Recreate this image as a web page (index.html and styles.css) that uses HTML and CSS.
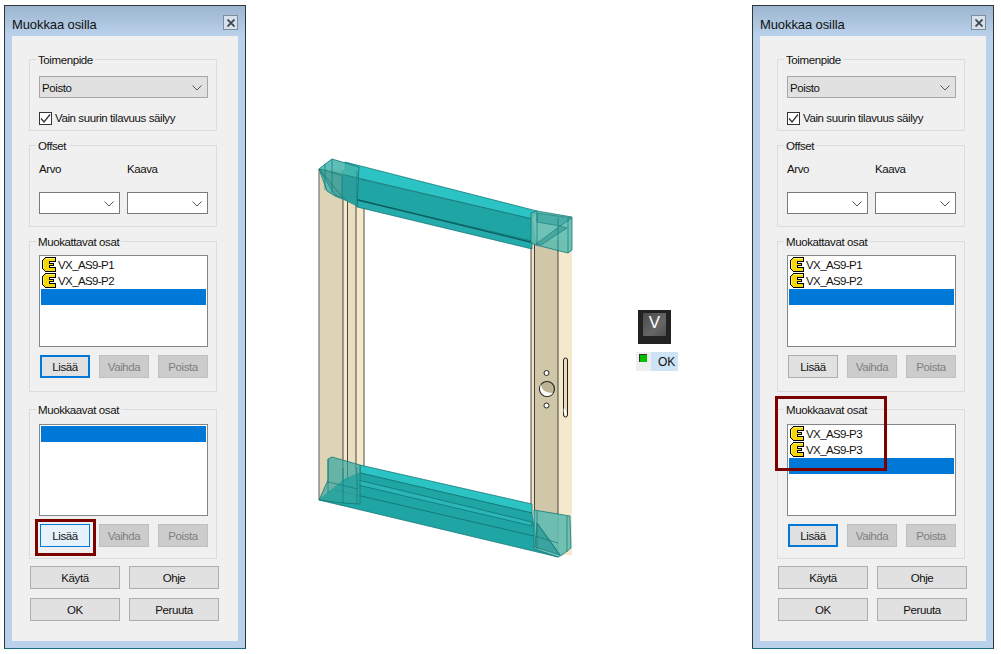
FILE: index.html
```html
<!DOCTYPE html>
<html lang="fi">
<head>
    <meta charset="UTF-8">
    <title>Muokkaa osilla</title>
    <link rel="stylesheet" href="styles.css">
</head>
<body>
    <svg class="defs" width="0" height="0">
        <symbol id="part" viewBox="0 0 14 15">
            <path d="M3.500 .5H13.500V4.500H7.500V6.500H11.500V8.500H7.500V10.500H13.500V14.500H3.500L.5 11.500V3.500Z" fill="#f7d708" stroke="#000" shape-rendering="crispEdges"/>
            <path d="M3.500 1.500H12.500M1.500 3.500V11" fill="none" stroke="#fff27a" shape-rendering="crispEdges"/>
        </symbol>
        <symbol id="chevron" viewBox="0 0 10 6">
            <path d="M.5 .5L5 5L9.500 .5" fill="none" stroke="#555"/>
        </symbol>
    </svg>
    <div class="stage">
        <!-- vasen dialogi -->
        <div class="dialog">
            <div class="titlebar">
                <span>Muokkaa osilla</span>
                <div class="close"><svg width="8" height="8" viewBox="0 0 8 8"><path d="M.5 .5L7.500 7.500M7.500 .5L.5 7.500" stroke="#3c4650" stroke-width="1.800"/></svg></div>
            </div>
            <div class="client">
                <div class="group group-action">
                    <div class="group-title">Toimenpide</div>
                    <div class="combo combo-grey">Poisto<svg class="chev"><use href="#chevron"/></svg></div>
                    <div class="check-row">
                        <div class="check"><svg width="13" height="13" viewBox="0 0 13 13"><path d="M2 6.500L5 10L11 2.500" fill="none" stroke="#333" stroke-width="1.300"/></svg></div>
                        <span>Vain suurin tilavuus säilyy</span>
                    </div>
                </div>
                <div class="group group-offset">
                    <div class="group-title">Offset</div>
                    <div class="offset-grid">
                        <div>Arvo</div>
                        <div>Kaava</div>
                        <div class="combo"><svg class="chev"><use href="#chevron"/></svg></div>
                        <div class="combo"><svg class="chev"><use href="#chevron"/></svg></div>
                    </div>
                </div>
                <div class="group group-parts group-edit">
                    <div class="group-title">Muokattavat osat</div>
                    <div class="list">
                        <div class="row"><svg class="part"><use href="#part"/></svg>VX_AS9-P1</div>
                        <div class="row"><svg class="part"><use href="#part"/></svg>VX_AS9-P2</div>
                        <div class="row selected"></div>
                    </div>
                    <div class="btn-row">
                        <div class="btn focus">Lisää</div>
                        <div class="btn off">Vaihda</div>
                        <div class="btn off">Poista</div>
                    </div>
                </div>
                <div class="group group-parts group-tool">
                    <div class="group-title">Muokkaavat osat</div>
                    <div class="list">
                        <div class="row selected"></div>
                    </div>
                    <div class="btn-row">
                        <div class="btn hover">Lisää</div>
                        <div class="btn off">Vaihda</div>
                        <div class="btn off">Poista</div>
                    </div>
                </div>
                <div class="bottom-btns">
                    <div class="btn">Käytä</div>
                    <div class="btn">Ohje</div>
                    <div class="btn">OK</div>
                    <div class="btn">Peruuta</div>
                </div>
            </div>
            <div class="mark mark-left"></div>
        </div>

        <!-- malli -->
        <div class="view">
            <svg class="model" viewBox="246 0 506 654" width="506" height="654">
                <!-- vasen pysty -->
                <polygon points="319,169 343,170 343,506 319,500" fill="#dfd3b5"/>
                <polygon points="343,170 348,170 348,506 343,506" fill="#f6e9c9"/>
                <polygon points="348,170 356,170 356,506 348,506" fill="#e9dec0"/>
                <polygon points="356,170 364,170 364,506 356,506" fill="#f6e9cb"/>
                <path d="M319 169V500" stroke="#777" stroke-width="1.200"/>
                <path d="M343 170V506M347.500 170V506M356 170V506M364 170V470" stroke="#222" stroke-width=".8"/>
                <!-- oikea pysty -->
                <rect x="531" y="240" width="3" height="275" fill="#f0e3c4"/>
                <rect x="534" y="240" width="24" height="310" fill="#d0c6a8"/>
                <rect x="558" y="240" width="14" height="315" fill="#f5e9cd"/>
                <path d="M531 240V515M534.500 240V550M558 240V550" stroke="#222" stroke-width=".8"/>
                <!-- lukko -->
                <circle cx="547" cy="389" r="7.500" fill="#bdb394" stroke="#222" stroke-width="1.100"/>
                <path d="M541 384C541 390 546 393 553 393C550 397 543 397 541 392C539.500 389 540 386 541 384Z" fill="#fff"/>
                <circle cx="546.500" cy="373" r="2.500" fill="#fff" stroke="#222"/>
                <circle cx="546.500" cy="405.500" r="2.500" fill="#fff" stroke="#222"/>
                <rect x="563.500" y="358" width="4" height="59" rx="2" fill="#e8dcbc" stroke="#222"/>
                <path d="M564 408C566 410 567 413 566 416C564 415 563 411 564 408Z" fill="#fff"/>

                <!-- yläpalkki -->
                <polygon points="345,162 537,211 532,219 345,175" fill="#2bc3c3" stroke="#0f6f70" stroke-width=".7"/>
                <polygon points="342,174 360,179 532,219 536,244 342,198" fill="#20a5a5" stroke="#0f6f70" stroke-width=".7"/>
                <polygon points="357,200 532,241 532,249 357,207" fill="#25abab" stroke="#0f6f70" stroke-width=".7"/>
                <path d="M342 196L534 243" stroke="#0c5c5e" stroke-width="1.300"/>
                <polygon points="319,169 325,164 332,159 359,167 357,206 345,200 335,196 327,191" fill="#43b3aa" fill-opacity=".85" stroke="#12787a" stroke-width=".8"/>
                <polygon points="342,175 357,178 357,205 342,199" fill="#2a9d9d"/>
                <polygon points="319,169 335,195 342,198 342,176 328,171" fill="#4ba59c" stroke="#12787a" stroke-width=".7"/>
                <path d="M325 164V190M332 159V193M357 171V205M332 172L358 178M319 169L345 200" stroke="#12787a" stroke-width=".7" fill="none"/>
                <polygon points="531,213 537,211 572,217 572,250 568,253 536,245 531,243" fill="#5fbcae" fill-opacity=".9" stroke="#12787a" stroke-width=".8"/>
                <polygon points="536,244 560,226 567,228 541,245" fill="#49a79f" stroke="#12787a" stroke-width=".6"/>
                <polygon points="537,213 572,218 560,226 537,222" fill="#3fa8a0" fill-opacity=".8" stroke="#12787a" stroke-width=".6"/>
                <path d="M537 211V245M568 218V253M558 218V252" stroke="#12787a" stroke-width=".7"/>

                <!-- alapalkki -->
                <polygon points="360,465 532,504 532,513 360,473" fill="#2bc3c3" stroke="#0f6f70" stroke-width=".7"/>
                <polygon points="319,500 345,479 360,473 532,513 537,549 558,557" fill="#20a5a5" stroke="#0f6f70" stroke-width=".7"/>
                <polygon points="358,480 532,522 532,526 358,485" fill="#2bb5b5" stroke="#0f6f70" stroke-width=".7"/>
                <path d="M335 490L534 536" stroke="#0f6f70" stroke-width=".8"/>
                <polygon points="328,459 332,457 360,465 360,504 343,503 319,500 328,480" fill="#33a79f" fill-opacity=".7" stroke="#12787a" stroke-width=".8"/>
                <path d="M328 459V493M343 468V503M357 467V503M328 482L358 489" stroke="#12787a" stroke-width=".7" fill="none"/>
                <polygon points="534,510 570,516 571,548 562,555 558,557 534,549" fill="#62bbb0" fill-opacity=".9" stroke="#12787a" stroke-width=".8"/>
                <polygon points="537,523 560,555 535,547" fill="#3aa39e" stroke="#12787a" stroke-width=".7"/>
                <path d="M537 511V549M567 516V552M537 523L560 555M535 536L558 543" stroke="#12787a" stroke-width=".7" fill="none"/>
            </svg>
            <div class="keycap"><div class="keycap-top">V</div></div>
            <div class="status">
                <div class="status-led"></div>
                <div class="status-text">OK</div>
            </div>
        </div>

        <!-- oikea dialogi -->
        <div class="dialog">
            <div class="titlebar">
                <span>Muokkaa osilla</span>
                <div class="close"><svg width="8" height="8" viewBox="0 0 8 8"><path d="M.5 .5L7.500 7.500M7.500 .5L.5 7.500" stroke="#3c4650" stroke-width="1.800"/></svg></div>
            </div>
            <div class="client">
                <div class="group group-action">
                    <div class="group-title">Toimenpide</div>
                    <div class="combo combo-grey">Poisto<svg class="chev"><use href="#chevron"/></svg></div>
                    <div class="check-row">
                        <div class="check"><svg width="13" height="13" viewBox="0 0 13 13"><path d="M2 6.500L5 10L11 2.500" fill="none" stroke="#333" stroke-width="1.300"/></svg></div>
                        <span>Vain suurin tilavuus säilyy</span>
                    </div>
                </div>
                <div class="group group-offset">
                    <div class="group-title">Offset</div>
                    <div class="offset-grid">
                        <div>Arvo</div>
                        <div>Kaava</div>
                        <div class="combo"><svg class="chev"><use href="#chevron"/></svg></div>
                        <div class="combo"><svg class="chev"><use href="#chevron"/></svg></div>
                    </div>
                </div>
                <div class="group group-parts group-edit">
                    <div class="group-title">Muokattavat osat</div>
                    <div class="list">
                        <div class="row"><svg class="part"><use href="#part"/></svg>VX_AS9-P1</div>
                        <div class="row"><svg class="part"><use href="#part"/></svg>VX_AS9-P2</div>
                        <div class="row selected"></div>
                    </div>
                    <div class="btn-row">
                        <div class="btn">Lisää</div>
                        <div class="btn off">Vaihda</div>
                        <div class="btn off">Poista</div>
                    </div>
                </div>
                <div class="group group-parts group-tool">
                    <div class="group-title">Muokkaavat osat</div>
                    <div class="list">
                        <div class="row"><svg class="part"><use href="#part"/></svg>VX_AS9-P3</div>
                        <div class="row"><svg class="part"><use href="#part"/></svg>VX_AS9-P3</div>
                        <div class="row selected"></div>
                    </div>
                    <div class="btn-row">
                        <div class="btn focus">Lisää</div>
                        <div class="btn off">Vaihda</div>
                        <div class="btn off">Poista</div>
                    </div>
                </div>
                <div class="bottom-btns">
                    <div class="btn">Käytä</div>
                    <div class="btn">Ohje</div>
                    <div class="btn">OK</div>
                    <div class="btn">Peruuta</div>
                </div>
            </div>
            <div class="mark mark-right"></div>
        </div>
    </div>
</body>
</html>
```

FILE: styles.css
```css
body {
    margin: 0;
    background: #fff;
    font-family: "Liberation Sans", Arial, sans-serif;
    font-size: 11.5px;
    line-height: 14px;
    letter-spacing: -0.4px;
    color: #111;
    overflow: hidden;
}
.defs {
    position: absolute;
}
.stage {
    display: flex;
    width: 1001px;
    height: 654px;
    padding-left: 4px;
    box-sizing: border-box;
}

/* dialogi */
.dialog {
    position: relative;
    display: flex;
    flex-direction: column;
    flex: none;
    width: 242px;
    height: 644px;
    margin-top: 5px;
    box-sizing: border-box;
    border: 1px solid #30363c;
    border-bottom-color: #1d6f80;
    background: #b9d1ea;
    padding: 0 7px 7px;
}
.titlebar {
    display: flex;
    justify-content: space-between;
    align-items: center;
    flex: none;
    height: 30px;
    box-sizing: border-box;
    margin: 0 -7px;
    padding: 8px 7px 0;
    background: linear-gradient(#9db6d0, #b9d1ea);
    font-size: 13px;
    letter-spacing: -0.1px;
}
.close {
    display: flex;
    align-items: center;
    justify-content: center;
    width: 13px;
    height: 13px;
    margin-top: -5px;
    border: 1px solid #7f8c99;
    background: #d6e1ec;
}
.client {
    flex: 1;
    background: #f0f0f0;
    padding: 23px 0 0 17px;
}

/* ryhmät */
.group {
    width: 188px;
    box-sizing: border-box;
    border: 1px solid #dcdcdc;
    padding: 0 8px 0 9px;
}
.group-title {
    width: fit-content;
    margin: -7px 0 0 -3px;
    padding: 0 2px;
    background: #f0f0f0;
}
.group-action {
    height: 72px;
}
.group-offset {
    height: 82px;
    margin-top: 14px;
}
.group-parts {
    height: 151px;
}
.group-edit {
    margin-top: 14px;
}
.group-tool {
    height: 150px;
    margin-top: 17px;
}
.group-tool .list {
    margin-top: 7px;
}
.group-action .combo {
    margin-top: 9px;
}
.combo {
    display: flex;
    align-items: center;
    justify-content: space-between;
    height: 22px;
    box-sizing: border-box;
    border: 1px solid #7a7a7a;
    background: #fff;
    padding: 1px 2px 0;
}
.combo-grey {
    background: #e1e1e1;
    border-color: #a6a6a6;
}
.chev {
    width: 10px;
    height: 6px;
    margin: 0 3px 0 auto;
}
.check-row {
    display: flex;
    align-items: center;
    gap: 3px;
    margin-top: 13px;
}
.check {
    width: 13px;
    height: 13px;
    box-sizing: border-box;
    border: 1px solid #333;
    background: #fff;
}
.check svg {
    display: block;
    margin: -1px;
}
.offset-grid {
    display: grid;
    grid-template-columns: 81px 81px;
    grid-template-rows: 14px 22px;
    column-gap: 7px;
    row-gap: 16px;
    margin-top: 9px;
}

/* listat */
.list {
    height: 92px;
    box-sizing: border-box;
    margin-top: 6px;
    border: 1px solid #82878c;
    background: #fff;
    padding: 1px;
}
.row {
    display: flex;
    align-items: center;
    gap: 2px;
    height: 16px;
    box-sizing: border-box;
    padding: 0 0 1px 1px;
    font-size: 11.5px;
    letter-spacing: -0.6px;
}
.selected {
    background: #0078d7;
}
.part {
    width: 14px;
    height: 15px;
}

/* napit */
.btn-row {
    display: flex;
    gap: 9px;
    margin: 8px 0 0 1px;
}
.btn {
    display: flex;
    align-items: center;
    justify-content: center;
    width: 50px;
    height: 23px;
    box-sizing: border-box;
    border: 1px solid #adadad;
    background: #e1e1e1;
}
.btn.focus {
    border: 2px solid #0078d7;
}
.btn.hover {
    border-color: #0078d7;
    background: #e5f1fb;
}
.btn.off {
    border-color: #bfbfbf;
    background: #cccccc;
    color: #808080;
}
.bottom-btns {
    display: grid;
    grid-template-columns: 90px 90px;
    column-gap: 9px;
    row-gap: 9px;
    margin: 7px 0 0 1px;
}
.bottom-btns .btn {
    width: 90px;
}

/* punaiset korostukset */
.mark {
    position: absolute;
    box-sizing: border-box;
    border: 3px solid #7b0000;
}
.mark-left {
    left: 30px;
    top: 513px;
    width: 61px;
    height: 37px;
}
.mark-right {
    left: 22px;
    top: 390px;
    width: 112px;
    height: 75px;
}

/* malli ja näppäin */
.view {
    position: relative;
    flex: none;
    width: 506px;
    height: 654px;
}
.model {
    display: block;
}
.keycap {
    position: absolute;
    left: 392px;
    top: 310px;
    width: 33px;
    height: 34px;
    box-sizing: border-box;
    background: #222;
    padding: 3px 5px 8px;
}
.keycap-top {
    height: 100%;
    background: linear-gradient(135deg, #4a4a4a, #666 60%, #505050);
    color: #fff;
    font-size: 17px;
    line-height: 19px;
    letter-spacing: 0;
    text-align: center;
}
.status {
    position: absolute;
    left: 390px;
    top: 352px;
    display: flex;
    width: 42px;
    height: 19px;
    background: #eeeeee;
}
.status-led {
    width: 8px;
    height: 8px;
    margin: 2px 4px 0 3px;
    box-sizing: border-box;
    border-top: 1px solid #333;
    border-left: 1px solid #333;
    background: #00c000;
}
.status-text {
    flex: 1;
    background: #cde4f7;
    padding: 3px 0 0 7px;
    font-size: 12px;
    letter-spacing: 0;
}
```
